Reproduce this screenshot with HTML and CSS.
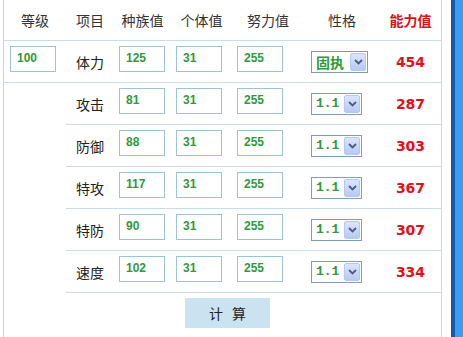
FILE: index.html
```html
<!DOCTYPE html>
<html lang="zh-CN">
<head>
  <meta charset="UTF-8" />
  <title>能力值计算</title>
  <link rel="stylesheet" href="styles.css">
</head>
<body>
  <div class="page">
    <div class="calc">
      <div class="row head">
        <div>等级</div>
        <div>项目</div>
        <div>种族值</div>
        <div>个体值</div>
        <div>努力值</div>
        <div>性格</div>
        <div class="red">能力值</div>
      </div>

      <div class="row">
        <div class="cell lv"><input class="num" value="100" /></div>
        <div class="label">体力</div>
        <div class="cell"><input class="num" value="125" /></div>
        <div class="cell"><input class="num" value="31" /></div>
        <div class="cell"><input class="num" value="255" /></div>
        <div class="cell nat">
          <span class="sel wide"><select><option>固执</option></select><span class="arrow"><svg width="9" height="6" viewBox="0 0 9 6"><path d="M1 1l3.5 3.5L8 1" fill="none" stroke="#4a5d80" stroke-width="1.8"/></svg></span></span>
        </div>
        <div class="stat">454</div>
      </div>

      <div class="row sub">
        <div class="label">攻击</div>
        <div class="cell"><input class="num" value="81" /></div>
        <div class="cell"><input class="num" value="31" /></div>
        <div class="cell"><input class="num" value="255" /></div>
        <div class="cell nat">
          <span class="sel"><select class="mono"><option>1.1</option></select><span class="arrow"><svg width="9" height="6" viewBox="0 0 9 6"><path d="M1 1l3.5 3.5L8 1" fill="none" stroke="#4a5d80" stroke-width="1.8"/></svg></span></span>
        </div>
        <div class="stat">287</div>
      </div>

      <div class="row sub">
        <div class="label">防御</div>
        <div class="cell"><input class="num" value="88" /></div>
        <div class="cell"><input class="num" value="31" /></div>
        <div class="cell"><input class="num" value="255" /></div>
        <div class="cell nat">
          <span class="sel"><select class="mono"><option>1.1</option></select><span class="arrow"><svg width="9" height="6" viewBox="0 0 9 6"><path d="M1 1l3.5 3.5L8 1" fill="none" stroke="#4a5d80" stroke-width="1.8"/></svg></span></span>
        </div>
        <div class="stat">303</div>
      </div>

      <div class="row sub">
        <div class="label">特攻</div>
        <div class="cell"><input class="num" value="117" /></div>
        <div class="cell"><input class="num" value="31" /></div>
        <div class="cell"><input class="num" value="255" /></div>
        <div class="cell nat">
          <span class="sel"><select class="mono"><option>1.1</option></select><span class="arrow"><svg width="9" height="6" viewBox="0 0 9 6"><path d="M1 1l3.5 3.5L8 1" fill="none" stroke="#4a5d80" stroke-width="1.8"/></svg></span></span>
        </div>
        <div class="stat">367</div>
      </div>

      <div class="row sub">
        <div class="label">特防</div>
        <div class="cell"><input class="num" value="90" /></div>
        <div class="cell"><input class="num" value="31" /></div>
        <div class="cell"><input class="num" value="255" /></div>
        <div class="cell nat">
          <span class="sel"><select class="mono"><option>1.1</option></select><span class="arrow"><svg width="9" height="6" viewBox="0 0 9 6"><path d="M1 1l3.5 3.5L8 1" fill="none" stroke="#4a5d80" stroke-width="1.8"/></svg></span></span>
        </div>
        <div class="stat">307</div>
      </div>

      <div class="row sub">
        <div class="label">速度</div>
        <div class="cell"><input class="num" value="102" /></div>
        <div class="cell"><input class="num" value="31" /></div>
        <div class="cell"><input class="num" value="255" /></div>
        <div class="cell nat">
          <span class="sel"><select class="mono"><option>1.1</option></select><span class="arrow"><svg width="9" height="6" viewBox="0 0 9 6"><path d="M1 1l3.5 3.5L8 1" fill="none" stroke="#4a5d80" stroke-width="1.8"/></svg></span></span>
        </div>
        <div class="stat">334</div>
      </div>

      <div class="foot">
        <button class="calc-btn">计 算</button>
      </div>
    </div>
    <div class="side"></div>
  </div>
</body>
</html>
```

FILE: styles.css
```css
body {
  margin: 0;
  font-family: "Noto Sans CJK SC", sans-serif;
  font-size: 14px;
  color: #333;
  background: #fff;
}
.page {
  display: flex;
  height: 337px;
  padding-left: 3px;
}
.calc {
  width: 439px;
  box-sizing: border-box;
  border-left: 1px solid #c9d7e1;
  border-right: 1px solid #c9d7e1;
}
.side {
  width: 12px;
  margin-left: 9px;
  background: linear-gradient(to right, #1458b2 4px, #379ef0 4px);
}
.row {
  display: grid;
  grid-template-columns: 62px 48px 57px 61px 72px 76px 61px;
  align-items: center;
  height: 42px;
  box-sizing: border-box;
  border-bottom: 1px solid #cadce8;
}
.head {
  height: 41px;
  text-align: center;
}
.sub {
  margin-left: 62px;
  grid-template-columns: 48px 57px 61px 72px 76px 61px;
}
.red {
  color: #e0101c;
  font-weight: bold;
}
.label {
  text-align: center;
  color: #222;
}
.cell {
  padding-left: 5px;
}
.lv {
  padding-left: 6px;
}
.nat {
  padding-left: 7px;
}
.num {
  display: block;
  width: 46px;
  height: 26px;
  box-sizing: border-box;
  margin: 0 0 5px 0;
  border: 1px solid #9fc3d6;
  padding: 0 0 3px 6px;
  font: bold 12px "Liberation Sans", Arial, sans-serif;
  color: #2f9a3c;
  background: #fff;
}
.sel {
  display: flex;
  align-items: center;
  width: 51px;
  height: 22px;
  box-sizing: border-box;
  border: 1px solid #7f9db9;
  padding: 1px;
  background: #fff;
}
.sel.wide {
  width: 57px;
}
.sel select {
  appearance: none;
  flex: 1;
  min-width: 0;
  height: 18px;
  border: 0;
  padding: 0 0 0 3px;
  margin: 0;
  background: none;
  font: bold 14px "Noto Sans CJK SC", sans-serif;
  line-height: 18px;
  color: #2f9a3c;
}
.sel select.mono {
  font: bold 13px "Liberation Mono", monospace;
}
.arrow {
  display: flex;
  align-items: center;
  justify-content: center;
  width: 16px;
  height: 18px;
  box-sizing: border-box;
  border: 1px solid #b6c8f0;
  border-radius: 2px;
  background: linear-gradient(#dbe5fd, #b6c9f6);
}
.stat {
  text-align: center;
  font: bold 14px "DejaVu Sans", sans-serif;
  color: #e3101c;
}
.foot {
  padding: 5px 0 0 181px;
}
.calc-btn {
  width: 85px;
  height: 30px;
  border: 0;
  background: #cbe3f1;
  font: 14px "Noto Sans CJK SC", sans-serif;
  color: #222;
  letter-spacing: 3px;
  padding: 0 0 0 3px;
}
```
